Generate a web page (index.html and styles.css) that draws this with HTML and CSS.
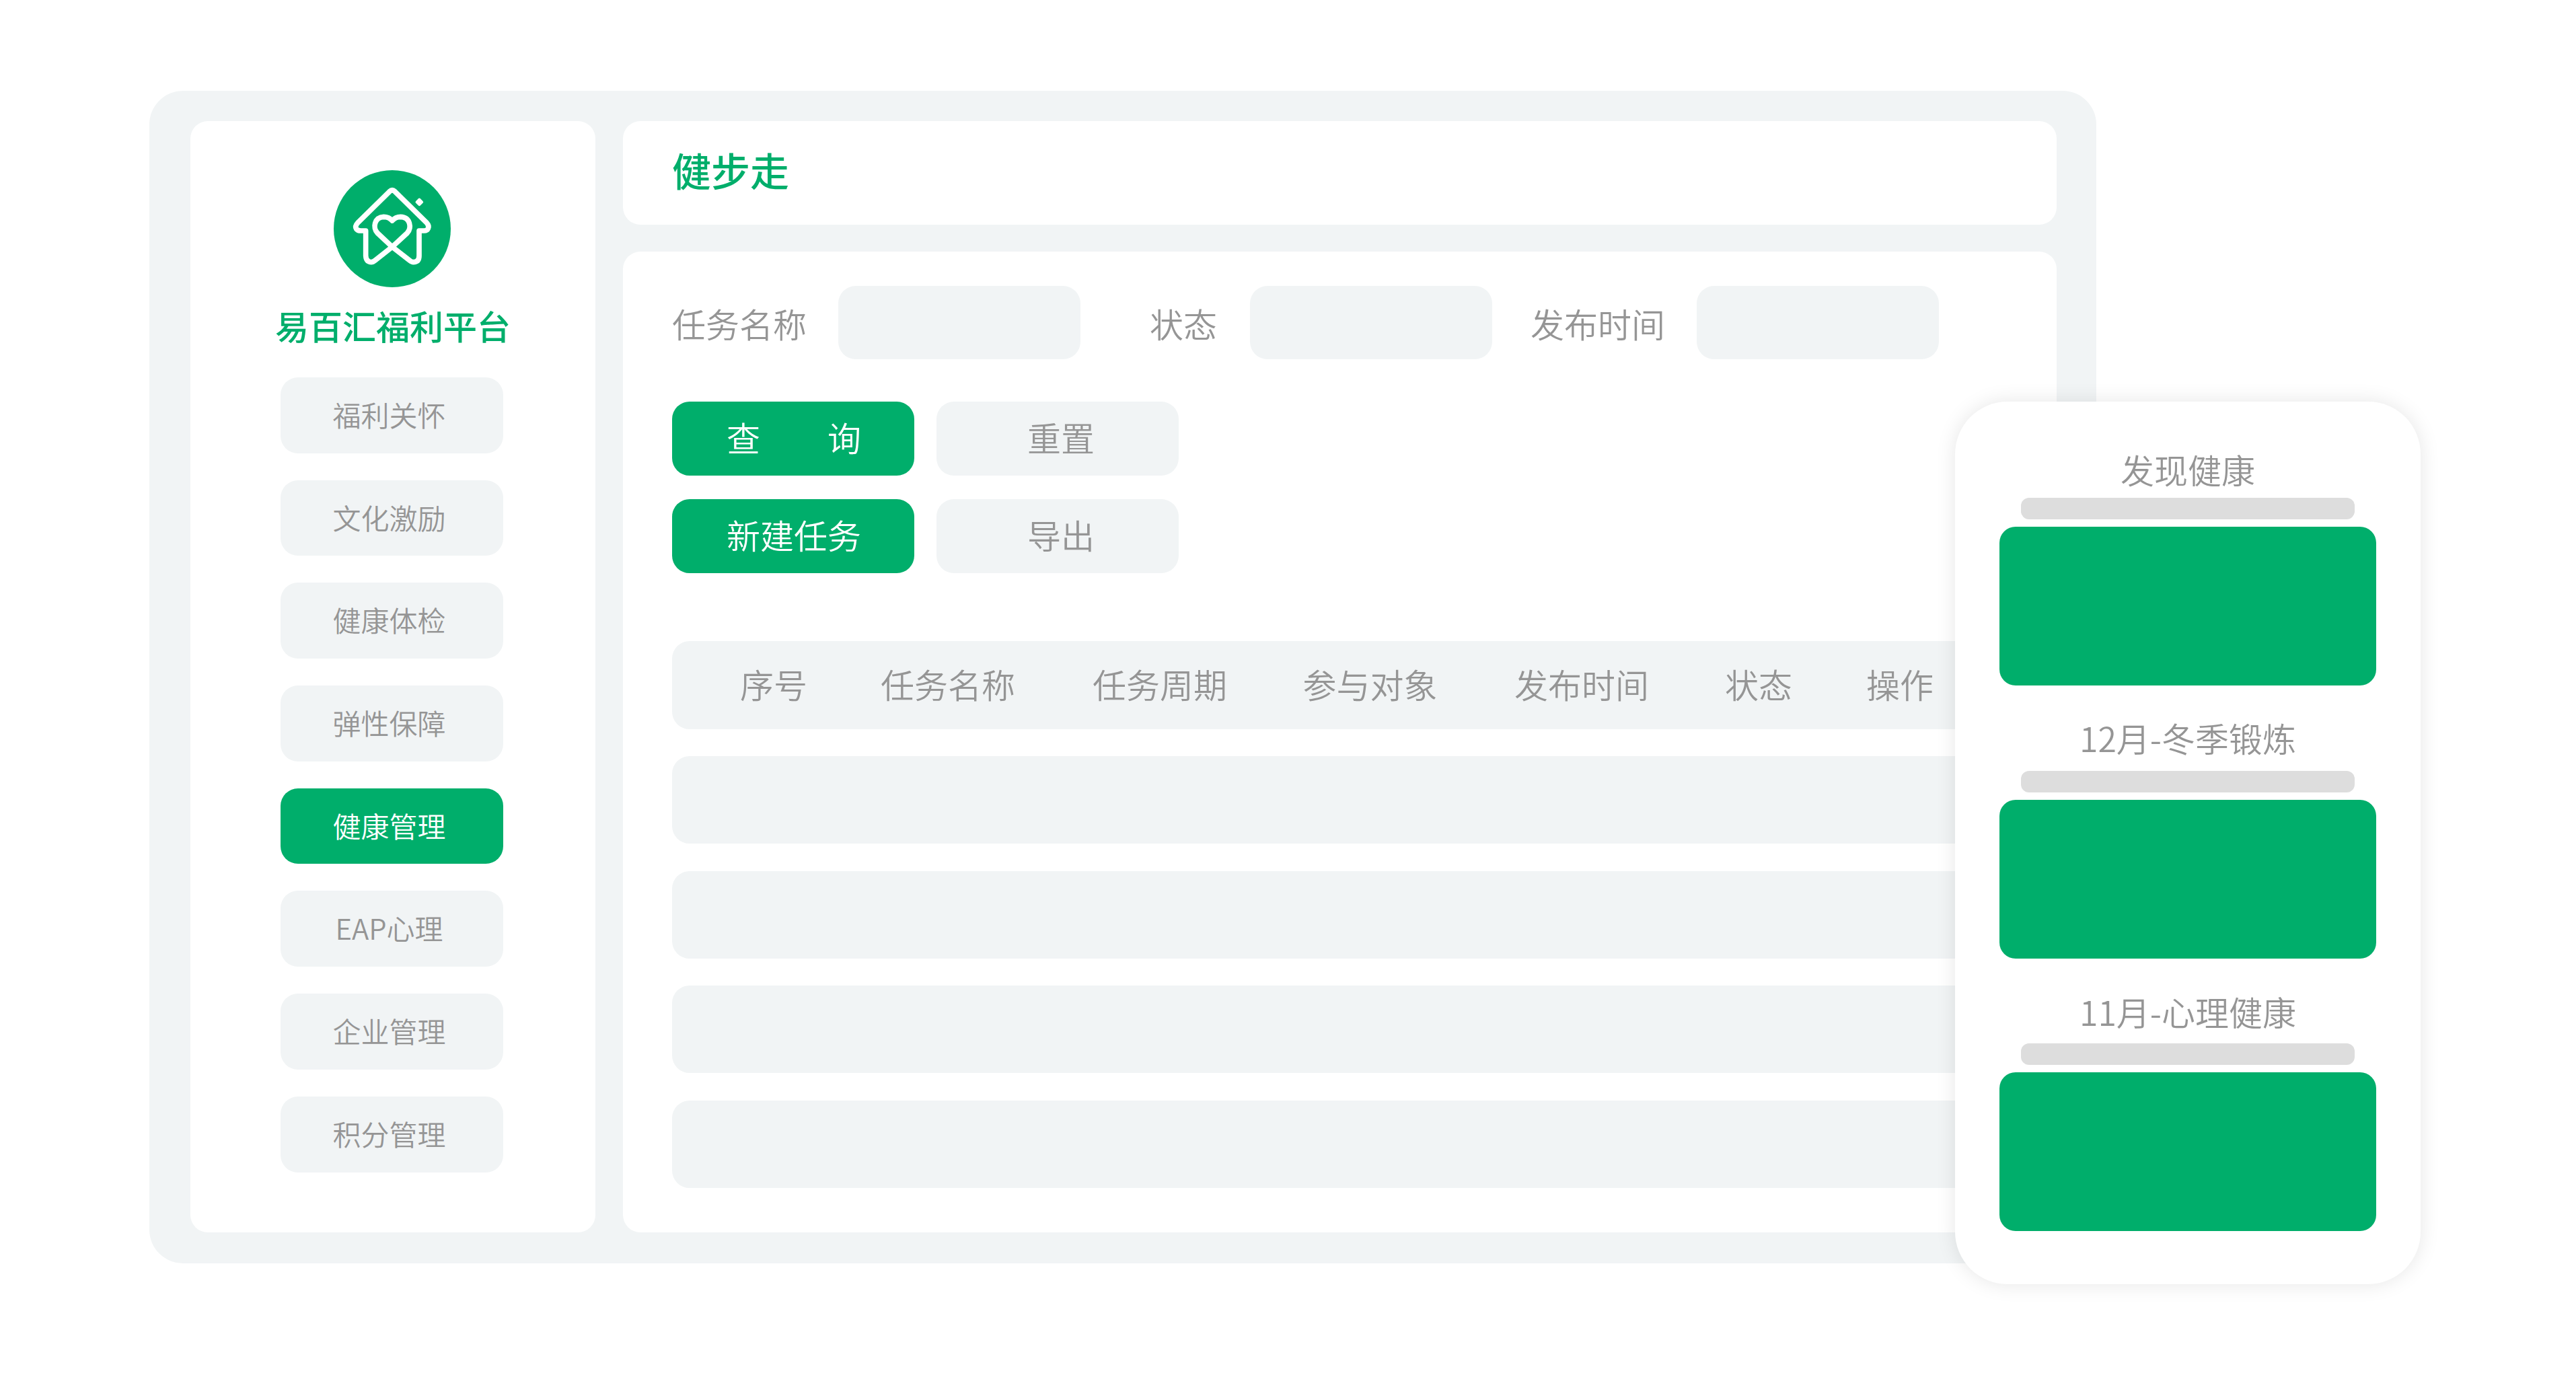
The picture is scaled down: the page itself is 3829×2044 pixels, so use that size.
FILE: index.html
```html
<!DOCTYPE html>
<html lang="zh-CN">
<head>
  <meta charset="UTF-8" />
  <title>易百汇福利平台</title>
  <link rel="stylesheet" href="styles.css">
</head>
<body>
  <div class="panel">
    <aside class="sidebar">
      <div class="logo">
        <svg viewBox="77 68 522 522" width="174" height="174">
          <circle cx="338" cy="329" r="261" fill="#00ae6b" />
          <path class="logo-line" d="M326 163 L184 303 Q170 318 178 330 Q184 338 198 338 L220 338 L220 450 Q222 478 245 478 Q252 478 262 470 L338 410 L405 348 C425 325 420 278 375 276 C358 276 345 285 338 293 C331 285 318 276 300 276 C258 278 250 325 272 348 L338 410 L415 470 Q425 478 432 478 Q458 478 458 450 L458 338 L480 338 Q494 338 498 328 Q504 316 492 303 L350 163 Q338 152 326 163 Z" />
          <rect x="445" y="196" width="28" height="28" rx="6" fill="#fff" transform="rotate(45 459 210)" />
        </svg>
      </div>
      <div class="brand">易百汇福利平台</div>
      <nav class="nav">
        <a class="nav-item">福利关怀</a>
        <a class="nav-item">文化激励</a>
        <a class="nav-item">健康体检</a>
        <a class="nav-item">弹性保障</a>
        <a class="nav-item active">健康管理</a>
        <a class="nav-item">EAP心理</a>
        <a class="nav-item">企业管理</a>
        <a class="nav-item">积分管理</a>
      </nav>
    </aside>

    <main class="main">
      <header class="topbar">健步走</header>
      <section class="content">
        <div class="filters">
          <label class="filter-label">任务名称</label>
          <div class="field"></div>
          <label class="filter-label second">状态</label>
          <div class="field"></div>
          <label class="filter-label third">发布时间</label>
          <div class="field"></div>
        </div>
        <div class="btn-row">
          <button class="btn primary">查　　询</button>
          <button class="btn">重置</button>
        </div>
        <div class="btn-row">
          <button class="btn primary">新建任务</button>
          <button class="btn">导出</button>
        </div>
        <div class="table-head">
          <span>序号</span>
          <span>任务名称</span>
          <span>任务周期</span>
          <span>参与对象</span>
          <span>发布时间</span>
          <span>状态</span>
          <span>操作</span>
        </div>
        <div class="table-row"></div>
        <div class="table-row"></div>
        <div class="table-row"></div>
        <div class="table-row"></div>
      </section>
    </main>
  </div>

  <div class="phone">
    <div class="phone-block first">
      <h3>发现健康</h3>
      <div class="phone-bar"></div>
      <div class="phone-pic"></div>
    </div>
    <div class="phone-block second">
      <h3>12月-冬季锻炼</h3>
      <div class="phone-bar"></div>
      <div class="phone-pic"></div>
    </div>
    <div class="phone-block third">
      <h3>11月-心理健康</h3>
      <div class="phone-bar"></div>
      <div class="phone-pic"></div>
    </div>
  </div>
</body>
</html>
```

FILE: styles.css
```css
html, body {
  margin: 0;
  padding: 0;
  background: #fff;
  overflow: hidden;
  height: 100vh;
  font-family: "Noto Sans CJK SC", "Noto Sans", sans-serif;
  font-weight: 350;
  color: #959595;
}

.panel {
  display: flex;
  gap: 41px;
  box-sizing: border-box;
  width: 2894px;
  height: 1743px;
  margin: 135px 0 0 222px;
  padding: 45px 59px 46px 61px;
  background: #f1f4f5;
  border-radius: 50px;
}

.sidebar {
  display: flex;
  flex-direction: column;
  align-items: center;
  box-sizing: border-box;
  width: 602px;
  padding: 73px 3px 0 0;
  background: #fff;
  border-radius: 26px;
}

.logo {
  height: 174px;
}

.logo-line {
  fill: none;
  stroke: #fff;
  stroke-width: 23;
  stroke-linejoin: round;
}

.brand {
  margin: 20px 0 0 3px;
  height: 72px;
  line-height: 72px;
  font-size: 50px;
  font-weight: 500;
  color: #00ae6b;
}

.nav {
  display: flex;
  flex-direction: column;
  gap: 40px;
  margin-top: 42px;
}

.nav-item {
  width: 331px;
  height: 112.7px;
  line-height: 110px;
  padding-right: 8px;
  box-sizing: border-box;
  text-align: center;
  font-size: 42px;
  background: #f1f4f5;
  border-radius: 26px;
}

.nav-item.active {
  background: #00ae6b;
  color: #fff;
}

.main {
  display: flex;
  flex-direction: column;
  gap: 40px;
  width: 2131px;
}

.topbar {
  box-sizing: border-box;
  height: 154px;
  padding-left: 73px;
  line-height: 145px;
  font-size: 58px;
  font-weight: 500;
  color: #00ae6b;
  background: #fff;
  border-radius: 26px;
}

.content {
  flex: 1;
  box-sizing: border-box;
  padding: 51px 30px 0 73px;
  background: #fff;
  border-radius: 26px;
}

.filters {
  display: flex;
  align-items: center;
  margin-bottom: 63px;
}

.filter-label {
  margin-right: 47px;
  font-size: 50px;
}

.filter-label.second {
  margin-left: 103px;
  margin-right: 49px;
}

.filter-label.third {
  margin-left: 57px;
  margin-right: 47px;
}

.field {
  width: 360px;
  height: 109px;
  background: #f1f4f5;
  border-radius: 26px;
}

.btn-row {
  display: flex;
  gap: 33px;
  margin-bottom: 35px;
}

.btn {
  width: 360px;
  height: 110px;
  padding: 0 0 6px 10px;
  border: none;
  font-family: inherit;
  font-weight: 350;
  font-size: 50px;
  color: #959595;
  background: #f1f4f5;
  border-radius: 26px;
}

.btn.primary {
  padding-left: 2px;
  background: #00ae6b;
  color: #fff;
}

.table-head {
  display: grid;
  grid-template-columns: 209px 315px 312.5px 314.5px 313px 210px auto;
  box-sizing: border-box;
  height: 130.5px;
  margin-top: 101px;
  padding-left: 101px;
  line-height: 126px;
  font-size: 50px;
  background: #f1f4f5;
  border-radius: 26px;
}

.table-row {
  height: 130px;
  margin-top: 40.5px;
  background: #f1f4f5;
  border-radius: 26px;
}

/* floats over the right edge of the panel */
.phone {
  position: absolute;
  left: 2906px;
  top: 597px;
  box-sizing: border-box;
  width: 692px;
  height: 1312px;
  padding-top: 71px;
  background: #fff;
  border-radius: 78px;
  box-shadow: 0 0 30px rgba(0, 0, 0, 0.1);
}

.phone-block {
  display: flex;
  flex-direction: column;
  align-items: center;
  height: 405.5px;
}

.phone-block h3 {
  margin: 0;
  height: 64px;
  line-height: 64px;
  font-size: 50px;
  font-weight: 350;
}

.phone-block.first h3 {
  margin: -3px 0 3px;
}

.phone-block.second h3 {
  margin: -10px 0 10px;
}

.phone-block.third h3 {
  margin: -8px 0 8px;
}

.phone-bar {
  width: 496px;
  height: 32px;
  margin-top: 8px;
  background: #ddd;
  border-radius: 12px;
}

.phone-pic {
  width: 560px;
  height: 236px;
  margin-top: 11px;
  background: #00ae6b;
  border-radius: 24px;
}
```
